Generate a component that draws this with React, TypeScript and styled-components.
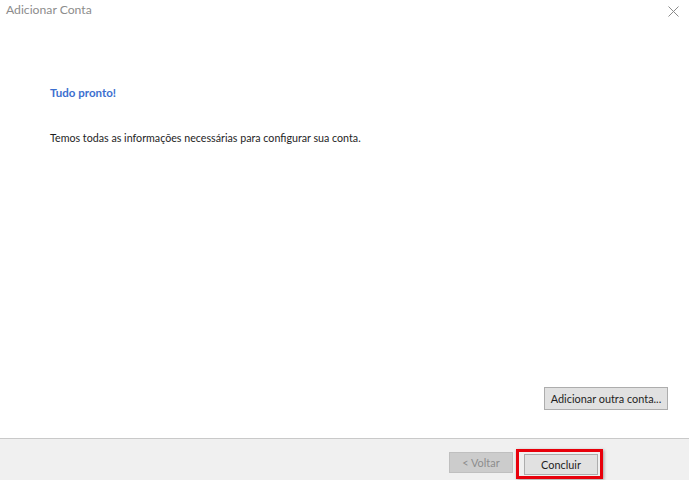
import React from "react";
import styled, { createGlobalStyle } from "styled-components";

const Global = createGlobalStyle`
  *, *::before, *::after { box-sizing: border-box; }
  html, body { margin: 0; padding: 0; background: #ffffff; }
  body { font-family: Lato, "Noto Sans", sans-serif; }
  #root { height: 480px; }
`;

const Dialog = styled.div`
  width: 689px;
  height: 480px;
  display: flex;
  flex-direction: column;
  background: #ffffff;
  overflow: hidden;
`;

const TitleBar = styled.div`
  height: 22px;
  display: flex;
  align-items: flex-start;
  justify-content: space-between;
  padding: 0 0 0 6px;
`;

const Title = styled.span`
  font-size: 12.2px;
  line-height: 20px;
  color: #8c8c8c;
`;

const CloseButton = styled.div`
  width: 30px;
  height: 22px;
  display: flex;
  align-items: center;
  justify-content: center;
  padding-right: 2px;
`;

const Body = styled.div`
  flex: 1;
  display: flex;
  flex-direction: column;
  padding: 64px 21px 28px 50px;
`;

const Heading = styled.div`
  font-size: 11.5px;
  font-weight: 700;
  color: #3c6fcf;
  line-height: 14px;
`;

const Message = styled.div`
  margin-top: 31px;
  font-size: 10.7px;
  color: #1e1e1e;
  line-height: 14px;
`;

const Spacer = styled.div`
  flex: 1;
`;

const ActionRow = styled.div`
  display: flex;
  justify-content: flex-end;
`;

const Button = styled.button<{ $disabled?: boolean }>`
  font-family: inherit;
  font-size: 10.9px;
  height: 23px;
  padding: 0 8px;
  background: ${(p) => (p.$disabled ? "#cccccc" : "#e1e1e1")};
  color: ${(p) => (p.$disabled ? "#8d8d8d" : "#1e1e1e")};
  border: 1px solid ${(p) => (p.$disabled ? "#bfbfbf" : "#adadad")};
  border-radius: 0;
  cursor: default;
`;

const AddButton = styled(Button)`
  width: 124px;
  padding: 0;
`;

const Footer = styled.div`
  height: 42px;
  border-top: 1px solid #c9c9c9;
  background: #f0f0f0;
  display: flex;
  align-items: flex-start;
  justify-content: flex-end;
  padding: 13px 86px 0 0;
  gap: 3px;
`;

const BackButton = styled(Button)`
  width: 64px;
  height: 21px;
`;

const FocusFrame = styled.div`
  border: 3px solid #e8000b;
  padding: 1px 2px 1px 5px;
  margin-top: -3px;
  box-shadow: 1px 1px 3px rgba(0, 0, 0, 0.35);
`;

const FinishButton = styled(Button)`
  width: 74px;
  height: 21px;
  background: #e1e1e1;
  border-color: #adadad;
`;

export default function App() {
  return (
    <>
      <Global />
      <Dialog>
        <TitleBar>
          <Title>Adicionar Conta</Title>
          <CloseButton>
            <svg width="11" height="11" viewBox="0 0 11 11">
              <path d="M0.5 0.5 L10.5 10.5 M10.5 0.5 L0.5 10.5" stroke="#8a8a8a" strokeWidth="1" fill="none" />
            </svg>
          </CloseButton>
        </TitleBar>
        <Body>
          <Heading>Tudo pronto!</Heading>
          <Message>Temos todas as informações necessárias para configurar sua conta.</Message>
          <Spacer />
          <ActionRow>
            <AddButton>Adicionar outra conta...</AddButton>
          </ActionRow>
        </Body>
        <Footer>
          <BackButton $disabled>&lt; Voltar</BackButton>
          <FocusFrame>
            <FinishButton>Concluir</FinishButton>
          </FocusFrame>
        </Footer>
      </Dialog>
    </>
  );
}
